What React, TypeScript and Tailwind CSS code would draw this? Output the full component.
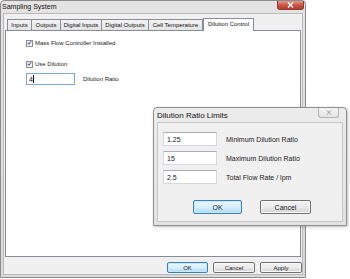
import React from 'react';

const font = { fontFamily: '"Liberation Sans", Arial, sans-serif' };

const tabs = [
  { label: 'Inputs', w: 'w-[25px]' },
  { label: 'Outputs', w: 'w-[30px]' },
  { label: 'Digital Inputs', w: 'w-[42px]' },
  { label: 'Digital Outputs', w: 'w-[48px]' },
  { label: 'Cell Temperature', w: 'w-[55px]' },
];

const Check: React.FC<{ label: string }> = ({ label }) => (
  <div className="flex items-center h-[8px]">
    <div className="w-[7px] h-[7px] border border-[#8e8f8f] bg-gradient-to-br from-[#dcdcdc] to-[#fbfbfb] flex items-center justify-center">
      <svg width="6" height="6" viewBox="0 0 6 6">
        <path d="M1 3 L2.4 4.6 L5 0.8" stroke="#2a4d8f" strokeWidth="1.1" fill="none" />
      </svg>
    </div>
    <span className="ml-[2px] text-[6px] leading-none text-[#1a1a1a]">{label}</span>
  </div>
);

const WinButton: React.FC<{ label: string; primary?: boolean; className: string }> = ({ label, primary, className }) => (
  <div
    className={`${className} rounded-[2px] border flex items-center justify-center leading-none text-[#1a1a1a] ${
      primary
        ? 'border-[#3c7fb1] bg-gradient-to-b from-[#eaf6fd] via-[#d9f0fc] to-[#a7d9f5] shadow-[inset_0_0_0_1px_#c5e8fa]'
        : 'border-[#707070] bg-gradient-to-b from-[#f2f2f2] via-[#ebebeb] to-[#d2d2d2] shadow-[inset_0_0_0_1px_#fafafa]'
    }`}
  >
    {label}
  </div>
);

const LimitRow: React.FC<{ value: string; label: string }> = ({ value, label }) => (
  <div className="flex items-center">
    <div className="w-[54px] h-[14px] bg-white border border-[#d5d8de] border-t-[#abadb3] flex items-center pl-[3px] text-[7px] leading-none text-[#1a1a1a]">
      {value}
    </div>
    <span className="ml-[9px] text-[7px] leading-none text-[#1a1a1a]">{label}</span>
  </div>
);

export default function App() {
  return (
    <div className="relative w-[350px] h-[279px] bg-white overflow-hidden" style={font}>
      {/* main window */}
      <div className="w-[306px] h-[278px] flex flex-col border border-[#8b8b8b] rounded-t-[4px] bg-gradient-to-b from-[#e4e4e4] to-[#dadada]">
        <div className="h-[12px] flex items-start justify-between">
          <span className="ml-[1px] mt-[2px] text-[7px] leading-none text-[#111]">Sampling System</span>
          <div className="mr-[1px] w-[27px] h-[9px] rounded-b-[3px] border border-t-0 border-[#8d3a30] bg-gradient-to-b from-[#e09a8d] via-[#c9564a] to-[#b8392b] flex items-center justify-center">
            <svg width="7" height="6" viewBox="0 0 7 6">
              <path d="M1 0.5 L6 5.5 M6 0.5 L1 5.5" stroke="#fff" strokeWidth="1.4" />
            </svg>
          </div>
        </div>
        <div className="flex-1 mx-[2px] mb-[2px] bg-[#f0f0f0] border border-[#b9b9b9] flex flex-col">
          {/* tab strip */}
          <div className="mt-[3px] ml-[3px] h-[13px] flex items-end">
            {tabs.map((t) => (
              <div
                key={t.label}
                className={`${t.w} h-[11px] -mr-[1px] border border-b-0 border-[#898c95] bg-gradient-to-b from-[#f3f3f3] to-[#e3e3e3] flex items-center justify-center text-[6px] leading-none text-[#111]`}
              >
                {t.label}
              </div>
            ))}
            <div className="relative z-10 w-[51px] h-[13px] -mb-[1px] ml-[1px] border border-b-0 border-[#898c95] bg-white flex items-start pt-[2px] justify-center text-[6px] leading-none text-[#111]">
              Dilution Control
            </div>
          </div>
          {/* panel */}
          <div className="mx-[1px] h-[227px] bg-white border border-[#898c95] pl-[20px] pt-[8px] flex flex-col">
            <Check label="Mass Flow Controller Installed" />
            <div className="mt-[13px]">
              <Check label="Use Dilution" />
            </div>
            <div className="mt-[5px] flex items-center">
              <div className="w-[49px] h-[12px] border border-[#7ea7d8] bg-white flex items-center pl-[2px] text-[7px] leading-none text-[#111]">
                4<div className="w-[1px] h-[8px] bg-black" />
              </div>
              <span className="ml-[8px] text-[6px] leading-none text-[#1a1a1a]">Dilution Ratio</span>
            </div>
          </div>
          {/* bottom buttons */}
          <div className="mt-[5px] flex justify-end gap-[5px] text-[6px]">
            <WinButton label="OK" primary className="w-[41px] h-[11px]" />
            <WinButton label="Cancel" className="w-[42px] h-[11px]" />
            <WinButton label="Apply" className="w-[42px] h-[11px]" />
          </div>
        </div>
      </div>

      {/* dialog overlay */}
      <div className="absolute left-[153px] top-[107px] w-[194px] h-[119px] flex flex-col border border-[#8e8e8e] rounded-t-[4px] bg-gradient-to-b from-[#ececec] to-[#e2e2e2] shadow-[1px_1px_3px_rgba(0,0,0,0.25)]">
        <div className="h-[14px] flex items-start justify-between">
          <span className="ml-[3px] mt-[4px] text-[8px] leading-none text-[#111]">Dilution Ratio Limits</span>
          <div className="mr-[7px] w-[21px] h-[10px] rounded-b-[3px] border border-t-0 border-[#b4b4b4] bg-gradient-to-b from-[#f4f4f4] to-[#e4e4e4] flex items-center justify-center">
            <svg width="6" height="5" viewBox="0 0 6 5">
              <path d="M1 0.5 L5 4.5 M5 0.5 L1 4.5" stroke="#9a9a9a" strokeWidth="1" />
            </svg>
          </div>
        </div>
        <div className="flex-1 mx-[3px] mb-[3px] bg-[#f0f0f0] border border-[#c8c8c8] pl-[5px] pt-[9px] flex flex-col">
          <div className="flex flex-col gap-[5px]">
            <LimitRow value="1.25" label="Minimum Dilution Ratio" />
            <LimitRow value="15" label="Maximum Dilution Ratio" />
            <LimitRow value="2.5" label="Total Flow Rate / lpm" />
          </div>
          <div className="mt-[16px] ml-[30px] flex gap-[18px] text-[7px]">
            <WinButton label="OK" primary className="w-[49px] h-[14px]" />
            <WinButton label="Cancel" className="w-[51px] h-[14px]" />
          </div>
        </div>
      </div>
    </div>
  );
}
